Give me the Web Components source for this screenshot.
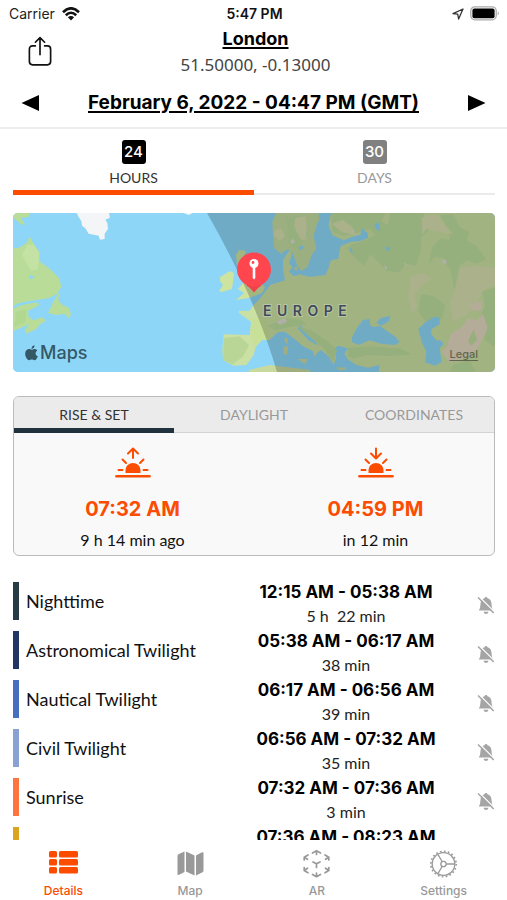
<!DOCTYPE html>
<html lang="en">
<head>
<meta charset="utf-8">
<meta name="viewport" content="width=device-width, initial-scale=1">
<title>Sun details</title>
<style>
  html { height: 100%; }
  body { margin: 0; height: 100vh; background: #fff; color: #000; font-family: Lato, "Open Sans", sans-serif; }
</style>
</head>
<body>
<sun-app></sun-app>
<script>
const base = `*{box-sizing:border-box}button{font:inherit;color:inherit;background:none;border:0;padding:0;margin:0;cursor:pointer}svg{display:block}a{color:inherit}`;
function define(name, render) {
  customElements.define(name, class extends HTMLElement {
    connectedCallback() {
      if (this.shadowRoot) return;
      const t = document.createElement('template');
      t.innerHTML = render(this);
      this.attachShadow({ mode: 'open' }).append(t.content.cloneNode(true));
    }
  });
}

define('status-bar', () => `
<style>${base}
:host{display:grid;grid-template-columns:1fr auto 1fr;align-items:center;height:27px;padding:0 7px 0 9px;font:14px/20px Inter,sans-serif;color:#222}
.l,.r{display:flex;align-items:center;gap:7px}.r{justify-content:flex-end;gap:6px}
b{font-weight:600;color:#111}
</style>
<div class="l"><span>Carrier</span>
<svg width="18" height="14" viewBox="0 0 18 14" fill="none" stroke="#111" stroke-width="2.6"><path d="M1 5.2Q9-2.6 17 5.2"/><path d="M3.800 8.300Q9 3.200 14.200 8.300"/><path d="M9 13.600L5.900 10.300Q9 7.600 12.100 10.300Z" fill="#111" stroke="none"/></svg></div>
<b>5:47 PM</b>
<div class="r">
<svg width="12" height="12" viewBox="0 0 12 12" fill="none" stroke="#333" stroke-width="1.3" stroke-linejoin="round"><path d="M11 1L1 5.700L5.700 6.200L6.600 11Z"/></svg>
<svg width="30" height="15" viewBox="0 0 30 15"><rect x=".8" y=".8" width="25.4" height="13" rx="4" fill="#fff" stroke="#aaa" stroke-width="1.3"/><rect x="2.4" y="2.5" width="22.2" height="9.7" rx="2" fill="#000"/><path d="M27.700 5.200Q30 7.400 27.700 9.400Z" fill="#aaa"/></svg></div>`);

define('place-header', () => `
<style>${base}
:host{display:block;border-bottom:2px solid #eee}
.top{display:grid;grid-template-columns:56px 1fr 52px;height:52px}
.share{justify-self:end;align-self:start;margin:9px 4px 0 0}
.place{display:flex;flex-direction:column;align-items:center;gap:2px}
.link{font-family:Inter,sans-serif;font-weight:700;font-size:18px;line-height:24px;text-decoration:underline;text-decoration-thickness:2px;text-underline-offset:2px}
.coord{font-family:"Noto Sans",sans-serif;font-size:17px;line-height:24px;color:#444}
.date{display:flex;justify-content:space-between;align-items:center;height:48px;padding:0 20px}
.date .link{font-size:19px}
</style>
<div class="top"><button class="share" aria-label="Share"><svg width="24" height="30" viewBox="0 0 26 32" fill="none" stroke="#111" stroke-width="1.8" stroke-linecap="round" stroke-linejoin="round"><path d="M8 10.500H5Q1.500 10.500 1.500 14V27.500Q1.500 31 5 31H21Q24.500 31 24.500 27.500V14Q24.500 10.500 21 10.500H18M13 20V2M8 6.500L13 1.500L18 6.500"/></svg></button>
<div class="place"><button class="link">London</button><span class="coord">51.50000, -0.13000</span></div></div>
<div class="date"><button aria-label="Previous day"><svg width="20" height="18" viewBox="0 0 20 18"><path d="M1.500 9L19 1V17Z"/></svg></button>
<button class="link">February 6, 2022 - 04:47 PM (GMT)</button>
<button aria-label="Next day"><svg width="20" height="18" viewBox="0 0 20 18"><path d="M18.500 9L1 1V17Z"/></svg></button></div>`);

define('range-tabs', () => `
<style>${base}
:host{display:grid;grid-template-columns:1fr 1fr;margin:0 12px 0 13px;height:66px;border-bottom:2px solid #ebebeb}
button{display:flex;flex-direction:column;align-items:center;gap:4px;padding-top:11px;height:66px;color:#999;border-bottom:5px solid transparent;font-size:14px;line-height:20px}
button.on{color:#333;border-bottom-color:#fc4c02}
i{display:block;width:24px;height:24px;border-radius:3px;background:#808080;color:#fff;font:500 15px/24px Inter,sans-serif;text-align:center}
.on i{background:#000}
</style>
<button class="on" aria-pressed="true"><i>24</i><span>HOURS</span></button>
<button aria-pressed="false"><i>30</i><span>DAYS</span></button>`);

define('sun-map', () => `
<style>${base}
:host{display:block;position:relative;margin:18px 12px 0 13px;height:159px;border-radius:5px;overflow:hidden;background:#8dd6f7}
.map{width:100%;height:100%}
.brand{position:absolute;left:12px;bottom:7px;display:flex;align-items:center;gap:2px;font:500 18px/24px Inter,sans-serif;color:#345866}
.legal{position:absolute;right:17px;bottom:10px;font:500 11px/16px Inter,sans-serif;color:#62664f;text-underline-offset:2px}
</style>
<svg class="map" viewBox="0 0 482 159" preserveAspectRatio="xMidYMid slice" role="img" aria-label="Map of Europe with the night shadow">
<rect width="482" height="159" fill="#8dd6f7"/>
<g transform="translate(-13 -8) scale(.33333)" fill="#b9dd98">
<path d="M38 20H88L86 36L62 38L76 60L62 56L38 36Z"/>
<path d="M38 130L58 128L78 115L90 95L100 115L118 140L120 170L150 192L178 220L184 245L170 268L145 280L90 288L55 295L38 305Z"/>
<path d="M38 312L65 300L110 292L118 300L84 318L86 335L100 346L128 337L138 347L120 358L108 373L78 386L74 374L88 358L60 370L38 378Z"/>
<path d="M144 324L160 290L178 262L175 285L184 298L206 308L213 328L206 340L194 326L168 330Z"/>
<path d="M86 220L90 211L102 214L96 223Z" fill="#8dd6f7"/>
<path d="M82 120L100 118L118 145L112 195L92 196L66 150Z" fill="#c3e2a3"/>
<path d="M50 320L80 312L76 350L42 365Z" fill="#b1d891"/>
<path d="M228 20L236 36L244 48L246 62L256 70L266 86L296 92L300 104L314 102L314 86L324 72L322 54L316 44L330 38L326 20Z" fill="#f3f5f6"/>
<path d="M548 23H580L566 30Z" fill="#eef6f8"/>
</g>
<g fill="#cde3a0">
<path d="M207 64L212 61L217 58L221 60L220 69L219 76L209 79L206 78L210 72L207 68Z"/>
<path d="M223 42L226 37L233 38L231 43L236 50L240 60L247 70L252 74L249 80L236 85L223 87L231 80L225 76L230 70L234 66L228 60L224 52Z"/>
</g>
<g transform="translate(240 -8) scale(.33333)">
<path fill="#cbe0a3" d="M-42 317L-12 318L2 300L18 284L32 266L52 240L96 226L90 190L90 165L110 135L116 150L108 175L118 186L108 200L122 214L142 208L170 216L218 210L226 190L234 165L256 162L262 122L272 105L240 95L226 62L236 10H740V510H376L380 480L346 488L310 480L286 464L274 446L286 430L254 422L240 436L250 455L242 480L228 455L205 436L188 410L160 378L142 360L134 370L166 406L210 430L196 440L184 454L180 438L150 424L128 404L96 380L74 382L48 406L28 404L8 426L2 450L-20 480L-58 482L-90 465L-92 436L-88 388L-10 390L-6 350L-42 324Z"/>
<path fill="#c2dba0" d="M70 22L58 50L60 90L64 130L84 146L104 132L120 146L134 186L146 198L164 186L176 150L196 124L184 86L192 56L214 20Z"/>
<path fill="#bad697" d="M-88 400L-40 394L-12 420L-30 455L-62 478L-90 465Z"/>
<path fill="#c9e099" d="M-4 340L40 340L48 402L26 404L8 426L-6 400Z"/>
<g fill="#bbdd9d">
<path d="M232 20H400L386 48L404 60L410 24H510L530 75L504 96L506 132L488 182L458 176L440 202L400 198L380 176L352 148L334 182L310 164L282 130L298 118L340 104L366 90L350 72L304 86L270 92L238 80Z"/>
<path d="M562 30L602 28L620 66L650 82L640 104L672 124L700 164L670 176L646 166L620 180L604 254L594 200L570 160L544 156L526 182L538 126L562 100L590 104L588 80Z"/>
<path d="M504 268L540 272L576 300L568 342L520 354L496 318Z"/>
<path d="M688 260L730 246V430L694 404L700 370L680 340L696 300Z"/>
<path d="M600 480L650 464L668 500H590Z"/>
<path d="M132 362L174 376L218 404L252 436L240 470L212 430L180 404Z"/>
<path d="M100 45L130 30L126 70L156 98L138 132L108 116Z"/>
<path d="M42 364L100 340L146 344L160 358L110 366L70 376Z"/>
<path d="M286 428L350 424L440 430L478 448L410 454L340 450L302 462L286 454Z"/>
</g>
<g fill="#d5deae">
<path d="M126 40L156 34L162 60L158 92L164 104L144 104L124 66Z"/><path d="M64 76L84 70L96 94L80 108L62 92Z"/>
<path d="M236 56L270 44L300 68L312 92L292 88L266 82Z"/>
<path d="M522 30L552 28L572 56L600 88L554 80L520 72L508 90L506 40Z"/>
<path d="M474 212L510 204L536 220L506 244L482 270L492 304L476 330L466 270Z"/>
<path d="M620 190L660 180L730 190V240L690 256L672 296L640 330L600 350L590 290L606 256Z"/>
<path d="M594 386L630 364L644 340L672 346L690 326L704 370L690 400L672 432L650 452L592 474L566 440L584 420Z" fill="#e2d6c0"/>
<path d="M654 300L684 288L688 316L660 318Z" fill="#e2d6c0"/>
</g>
<path d="M652 392L662 374L672 404L656 422L646 410Z" fill="#bddb9c"/>
<g fill="#dadccf"><path d="M112 108L120 100L126 112L116 118ZM184 120L194 114L196 126ZM294 72L304 78L296 84ZM316 98L328 104L320 112ZM394 180L404 188L396 196ZM566 168L576 162L582 172L572 178ZM452 172L462 178L458 184ZM70 350L96 338L102 350L80 360Z"/></g>
<g fill="#8dd6f7">
<path d="M190 70L202 54L196 25H234L226 60L238 90L272 106L302 94L322 90L326 70L344 84L346 98L322 108L296 110L264 122L254 154L200 190L174 170L190 128L182 96Z"/>
<path d="M294 126L300 146L290 138ZM364 60L378 52L382 78L368 72ZM398 124L412 130L402 142ZM136 128L148 120L152 128L142 136Z"/>
<path d="M296 398L312 368L330 345L350 342L352 362L366 366L380 362L402 378L428 396L440 412L424 420L384 416L350 406L316 420L298 412Z"/>
<path d="M370 354L382 340L412 332L408 348L386 362Z"/>
<path d="M496 372L514 354L544 335L560 338L560 358L536 372L534 386L550 406L562 406L572 416L560 430L566 472L546 482L516 472L520 440L506 410Z"/>
</g>
<g fill="#c8d99e"><path d="M94 398L104 400L104 416L96 414ZM90 426L106 422L102 448L92 448ZM134 462L164 462L156 478ZM250 487L280 488L276 494H254ZM120 190L134 184L132 198ZM-10 494L50 480L130 490L170 494L176 510H-20Z"/></g>
</g>
<path d="M194 0H482V159H264Q242 84 194 0Z" fill="#000" fill-opacity=".2"/>
<text x="250" y="103" font-family="Inter,sans-serif" font-size="14" font-weight="600" letter-spacing="5.500" fill="#3f4a5c" stroke="#d5d9c1" stroke-opacity=".5" stroke-width="2" paint-order="stroke">EUROPE</text>
<path d="M233 72Q238 75 241 79.500Q244 75 249 72Z" fill="#ef424d"/><circle cx="241" cy="56.500" r="17" fill="#ff464f"/>
<path d="M239.700 53H242.300V65L241 66.500L239.700 65Z" fill="#fff"/><circle cx="241" cy="50.500" r="4.500" fill="#fff"/><circle cx="240" cy="49.500" r="1.400" fill="#ff464f"/>
</svg>
<div class="brand"><svg width="13" height="16" viewBox="0 0 13 16" fill="#345866"><path d="M9.500.2Q9.600 3.500 6.500 3.900Q6.400 1 9.500.2ZM6.600 4.800C7.600 4.800 8.200 4 9.600 4Q11.300 4 12.300 5.400C9.800 7 10.200 10.100 12.800 11.200Q11.400 15.200 9.500 15.200C8.400 15.200 8 14.600 6.800 14.600S5.100 15.200 4.100 15.200C2.200 15.200.2 11.700.2 8.800C.2 5.600 2.200 4.100 4.100 4.100C5.200 4.100 6 4.800 6.600 4.800Z"/></svg><span>Maps</span></div>
<a class="legal" href="#legal">Legal</a>`);

define('sun-event', el => {
  const rise = el.getAttribute('kind') === 'rise';
  return `
<style>${base}
:host{display:flex;flex-direction:column;align-items:center;padding-top:14px}
svg{width:36px;height:32px}
b{font-family:Inter,sans-serif;font-weight:700;font-size:20px;line-height:28px;margin-top:16px;color:#fc4c02}
span{font-size:16px;line-height:22px;margin-top:6px;color:#111}
</style>
<svg viewBox="0 0 36 32" fill="none" stroke="#fc4c02" stroke-width="2" stroke-linecap="round" stroke-linejoin="round"><path d="M1.500 29.200H34.500" stroke-width="2.600"/><path d="M3.500 23H7.500M28.500 23H32.500M7.500 12.500L11 16M28.500 12.500L25 16"/><path d="M18 1.500V11M${rise ? '13 6.500L18 1.500L23 6.500' : '13 6.500L18 11.500L23 6.500'}"/><path d="M10.500 26V23A7.500 7 0 0 1 25.500 23V26Z" fill="#fc4c02" stroke="none"/></svg>
<b><slot name="time"></slot></b><span><slot></slot></span>`;
});

define('sun-card', () => `
<style>${base}
:host{display:block;margin:24px 12px 0 13px;height:160px;border:1px solid #bbb;border-radius:6px;background:#f9f9f9;overflow:hidden}
.tabs{display:grid;grid-template-columns:repeat(3,1fr);height:36px;background:#ebebeb;border-bottom:1px solid #d4d4d4}
.tabs button{height:36px;border-bottom:5px solid transparent;color:#999;font-size:14px;line-height:31px;padding-top:2px}
.tabs .on{color:#333;border-color:#20323e}
.events{display:grid;grid-template-columns:1fr 1fr;gap:6px}
</style>
<div class="tabs"><button class="on" aria-pressed="true">RISE &amp; SET</button><button aria-pressed="false">DAYLIGHT</button><button aria-pressed="false">COORDINATES</button></div>
<div class="events"><slot></slot></div>`);

define('phase-row', el => `
<style>${base}
:host{display:grid;grid-template:38px / 6px 1fr 190px 36px 18px;align-items:center;margin:0 12px 0 13px}
.bar{height:38px;background:${el.getAttribute('tone')}}
.name{font-size:18px;line-height:24px;padding-left:7px;color:#111;white-space:nowrap}
.times{display:flex;flex-direction:column;align-items:center;gap:1px;padding-top:4px;white-space:nowrap}
b{font-family:Inter,sans-serif;font-weight:700;font-size:17px;line-height:24px}
small{font-size:16px;line-height:22px;color:#222;white-space:pre}
button{grid-column:5;margin-top:8px}
</style>
<div class="bar"></div><div class="name"><slot></slot></div>
<div class="times"><b>${el.getAttribute('span')}</b><small>${el.getAttribute('length')}</small></div>
<button aria-label="Turn on reminder"><svg width="18" height="19" viewBox="0 0 18 19"><path d="M9 1Q10.300 1 10.500 2.300Q14.500 3.500 14.500 8Q14.500 12 16.200 14.500H1.800Q3.500 12 3.500 8Q3.500 3.500 7.500 2.300Q7.700 1 9 1ZM6.500 15.700H11.500Q11 18 9 18Q7 18 6.500 15.700Z" fill="#a5a5a5"/><path d="M2 .5L17.500 16" stroke="#fff" stroke-width="1.200"/><path d="M1 1.500L16.700 17" stroke="#a5a5a5" stroke-width="1.500"/></svg></button>`);

const icons = {
  list: `<g fill="#fc4c02"><rect x="0" y="1" width="8" height="6.500" rx="1.500"/><rect x="10" y="1" width="19" height="6.500" rx="1.500"/><rect x="0" y="9" width="8" height="6.500" rx="1.500"/><rect x="10" y="9" width="19" height="6.500" rx="1.500"/><rect x="0" y="17" width="8" height="6.500" rx="1.500"/><rect x="10" y="17" width="19" height="6.500" rx="1.500"/></g>`,
  map: `<path fill="#999" d="M1.500 6Q1.500 4.500 3 4L8.500 1.500V22L3 24.800Q1.500 25.300 1.500 24ZM10 1.500L18.500 5.500V25.500L10 21.500ZM20 5.500L25.500 2.500Q27.500 1.800 27.500 3V20.500Q27.500 21.800 26.500 22.300L20 25.500Z"/>`,
  ar: `<g fill="none" stroke="#999" stroke-width="1.700" stroke-linecap="round" stroke-linejoin="round"><path d="M10.500 3L14.500 .8L18.500 3M14.500 1V4.500M2.200 10V7.200L6 5M2.500 7.500L5.500 9.300M26.800 10V7.200L23 5M26.500 7.500L23.500 9.300M2.200 17.500V20.500L6 22.700M2.500 20.300L5.500 18.200M26.800 17.500V20.500L23 22.700M26.500 20.300L23.500 18.200M10.500 24.500L14.500 26.700L18.500 24.500M14.500 26.500V23M11 12L14.500 13.800L18 12M14.500 14V17.500"/></g>`,
  gear: `<g fill="none" stroke="#999"><circle cx="14.500" cy="14" r="12.700" stroke-width="1.600" stroke-dasharray="1.700 2.290"/><circle cx="14.500" cy="14" r="11.300" stroke-width="1.300"/><circle cx="14.500" cy="14" r="2.700" stroke-width="1.300"/><path d="M17.300 14H25.700M13.100 11.500L8.900 4.300M13.100 16.500L8.900 23.700" stroke-width="1.300"/></g>`
};
define('nav-item', el => `
<style>${base}
:host{display:block}
button{width:100%;height:60px;display:flex;flex-direction:column;align-items:center;padding-top:10px;gap:4px;color:${el.hasAttribute('active') ? '#fc4c02' : '#999'};font:500 12px/18px Inter,sans-serif}
svg{width:29px;height:28px;overflow:visible}
</style>
<button ${el.hasAttribute('active') ? 'aria-current="page"' : ''}><svg viewBox="0 0 29 28">${icons[el.getAttribute('icon')]}</svg><span><slot></slot></span></button>`);

define('sun-app', () => `
<style>${base}
:host{display:flex;flex-direction:column;height:100vh}
.list{flex:1;min-height:0;overflow-x:hidden;overflow-y:auto;scrollbar-width:none;display:flex;flex-direction:column;gap:11px;padding-top:26px}
.list>*{flex:none}
nav{display:grid;grid-template-columns:repeat(4,1fr);background:#fff}
</style>
<status-bar></status-bar><place-header></place-header><range-tabs></range-tabs><sun-map></sun-map>
<sun-card><sun-event kind="rise"><span slot="time">07:32 AM</span>9 h 14 min ago</sun-event><sun-event kind="set"><span slot="time">04:59 PM</span>in 12 min</sun-event></sun-card>
<div class="list">
<phase-row tone="#273b45" span="12:15 AM - 05:38 AM" length="5 h  22 min">Nighttime</phase-row>
<phase-row tone="#213663" span="05:38 AM - 06:17 AM" length="38 min">Astronomical Twilight</phase-row>
<phase-row tone="#4670bd" span="06:17 AM - 06:56 AM" length="39 min">Nautical Twilight</phase-row>
<phase-row tone="#8aa2d3" span="06:56 AM - 07:32 AM" length="35 min">Civil Twilight</phase-row>
<phase-row tone="#ff7540" span="07:32 AM - 07:36 AM" length="3 min">Sunrise</phase-row>
<phase-row tone="#daa520" span="07:36 AM - 08:23 AM" length="46 min">Golden Hour</phase-row>
</div>
<nav><nav-item icon="list" active>Details</nav-item><nav-item icon="map">Map</nav-item><nav-item icon="ar">AR</nav-item><nav-item icon="gear">Settings</nav-item></nav>`);
</script>
</body>
</html>
